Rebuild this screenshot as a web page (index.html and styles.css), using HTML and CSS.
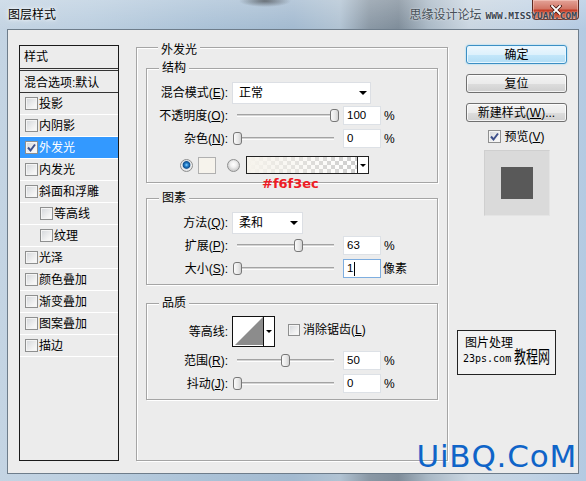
FILE: index.html
```html
<!DOCTYPE html>
<html lang="zh-CN">
<head>
<meta charset="utf-8">
<title>图层样式</title>
<link rel="stylesheet" href="styles.css">
</head>
<body>
<div class="window">
  <div class="titlebar">
    <span class="title">图层样式</span>
    <span class="site"><span class="site-cn">思缘设计论坛</span><span class="site-url">WWW.MISSYUAN.COM</span></span>
    <span class="close"><svg width="12" height="10" viewBox="0 0 12 10"><path d="M2 1L10 9M10 1L2 9" stroke="#43160f" stroke-width="3.4" stroke-linecap="square"/><path d="M2 1L10 9M10 1L2 9" stroke="#fff" stroke-width="1.8" stroke-linecap="square"/></svg></span>
  </div>
  <div class="client">
    <div class="stylelist">
      <div class="sl-head">样式</div>
      <div class="sl-blend">混合选项:默认</div>
      <div class="sl-item"><span class="cb"></span>投影</div>
      <div class="sl-item"><span class="cb"></span>内阴影</div>
      <div class="sl-item selected"><span class="cb"><svg width="11" height="11" viewBox="0 0 11 11"><path d="M2 5.5L4.5 8.5L9 2.5" stroke="#3d4f8a" stroke-width="2" fill="none"/></svg></span>外发光</div>
      <div class="sl-item"><span class="cb"></span>内发光</div>
      <div class="sl-item"><span class="cb"></span>斜面和浮雕</div>
      <div class="sl-item sl-sub"><span class="cb"></span>等高线</div>
      <div class="sl-item sl-sub"><span class="cb"></span>纹理</div>
      <div class="sl-item"><span class="cb"></span>光泽</div>
      <div class="sl-item"><span class="cb"></span>颜色叠加</div>
      <div class="sl-item"><span class="cb"></span>渐变叠加</div>
      <div class="sl-item"><span class="cb"></span>图案叠加</div>
      <div class="sl-item"><span class="cb"></span>描边</div>
    </div>

    <div class="group outer">
      <div class="legend legend-outer">外发光</div>

      <div class="group sub g-struct">
        <div class="legend">结构</div>
        <div class="row r-sel">
          <span class="lab">混合模式(<u>E</u>):</span>
          <div class="select sel-blend"><span>正常</span><span class="tri"></span></div>
        </div>
        <div class="row r-a">
          <span class="lab">不透明度(<u>O</u>):</span>
          <div class="slider"><span class="track"></span><span class="knob" style="left:98px"></span></div>
          <span class="num">100</span><span class="pct">%</span>
        </div>
        <div class="row r-b">
          <span class="lab">杂色(<u>N</u>):</span>
          <div class="slider"><span class="track"></span><span class="knob" style="left:1px"></span></div>
          <span class="num">0</span><span class="pct">%</span>
        </div>
        <div class="row r-color">
          <span class="radio on"></span>
          <span class="swatch"></span>
          <span class="radio"></span>
          <div class="gradbox"><span class="grad-fill"></span><span class="grad-arrow"><span class="tri small"></span></span></div>
        </div>
      </div>

      <div class="group sub g-elem">
        <div class="legend">图素</div>
        <div class="row r-sel">
          <span class="lab">方法(<u>Q</u>):</span>
          <div class="select sel-method"><span>柔和</span><span class="tri"></span></div>
        </div>
        <div class="row r-a">
          <span class="lab">扩展(<u>P</u>):</span>
          <div class="slider"><span class="track"></span><span class="knob" style="left:62px"></span></div>
          <span class="num">63</span><span class="pct">%</span>
        </div>
        <div class="row r-b">
          <span class="lab">大小(<u>S</u>):</span>
          <div class="slider"><span class="track"></span><span class="knob" style="left:1px"></span></div>
          <span class="num focus">1<span class="caret"></span></span><span class="unit">像素</span>
        </div>
      </div>

      <div class="group sub g-qual">
        <div class="legend">品质</div>
        <div class="row r-contour">
          <span class="lab">等高线:</span>
          <div class="contour">
            <svg class="curve" width="30" height="29" viewBox="0 0 30 29"><rect width="30" height="29" fill="#fff"/><polygon points="2,28 30,0 30,28" fill="#8c8c8c"/></svg>
            <span class="contour-arrow"><span class="tri small"></span></span>
          </div>
          <span class="cb aa"></span><span class="aa-text">消除锯齿(<u>L</u>)</span>
        </div>
        <div class="row r-b">
          <span class="lab">范围(<u>R</u>):</span>
          <div class="slider"><span class="track"></span><span class="knob" style="left:49px"></span></div>
          <span class="num">50</span><span class="pct">%</span>
        </div>
        <div class="row r-b">
          <span class="lab">抖动(<u>J</u>):</span>
          <div class="slider"><span class="track"></span><span class="knob" style="left:1px"></span></div>
          <span class="num">0</span><span class="pct">%</span>
        </div>
      </div>
    </div>

    <div class="rcol">
      <div class="btn default">确定</div>
      <div class="btn">复位</div>
      <div class="btn">新建样式(<u>W</u>)...</div>
      <div class="pv"><span class="cb"><svg width="11" height="11" viewBox="0 0 11 11"><path d="M2 5.5L4.5 8.5L9 2.5" stroke="#3d4f8a" stroke-width="2" fill="none"/></svg></span><span>预览(<u>V</u>)</span></div>
      <div class="preview"><div class="preview-inner"></div></div>
      <div class="logo">
        <div class="logo-left"><span class="logo-cn">图片处理</span><span class="logo-url">23ps.com</span></div>
        <span class="logo-big">教程网</span>
      </div>
    </div>
  </div>
  <span class="hex">#f6f3ec</span>
  <span class="uibq">UiBQ.CoM</span>
</div>
</body>
</html>
```

FILE: styles.css
```css
* { box-sizing: border-box; }
html, body { margin: 0; padding: 0; }
body {
  width: 586px;
  height: 481px;
  overflow: hidden;
  font-family: "Liberation Sans", "Noto Sans CJK SC", sans-serif;
  font-size: 12px;
  line-height: 14px;
  color: #000;
  background: #b9cde2;
}
u { text-decoration: underline; text-underline-offset: 1px; }

.window {
  position: relative;
  width: 586px;
  height: 481px;
  display: flex;
  flex-direction: column;
  background:
    radial-gradient(ellipse 26px 6px at 265px 1px, rgba(40,40,40,0.55), rgba(40,40,40,0)),
    linear-gradient(rgba(255,255,255,0.22), rgba(255,255,255,0) 29px),
    linear-gradient(90deg, #c4d4e3 0%, #bccfe0 15%, #abc2d7 35%, #a3bad0 50%, #b1c3d3 58%, #8a98a5 63%, #7f8d9a 68%, #a9b8c5 73%, #cad6e1 80%, #c2d3e4 90%, #b4cae2 100%);
}

.titlebar {
  height: 29px;
  display: flex;
  align-items: center;
  padding-left: 8px;
  flex: none;
}
.title { text-shadow: 0 0 6px #fff, 0 0 3px #fff; }
.site {
  margin-left: auto;
  margin-right: 9px;
  display: flex;
  align-items: center;
  position: relative;
  z-index: 2;
}
.site-cn { color: #474f57; text-shadow: 0 0 2px rgba(255,255,255,0.8); }
.site-url {
  margin-left: 4px;
  font-family: "DejaVu Sans Mono", monospace;
  font-weight: bold;
  font-size: 9.5px;
  color: #3a4550;
  text-shadow: 0 0 2px #fff;
  padding-top: 2px;
}
.close {
  position: absolute;
  top: 0;
  right: 7px;
  width: 47px;
  height: 20px;
  border: 1px solid #5e2a22;
  border-top: none;
  border-radius: 0 0 4px 4px;
  background: linear-gradient(#e3a398 0%, #d27666 45%, #c23a24 55%, #cf5a3e 100%);
  box-shadow: inset 0 0 0 1px rgba(255,220,210,0.45);
  display: flex;
  align-items: center;
  justify-content: center;
}

.client {
  height: 445px;
  margin: 0 7px;
  border: 1px solid #6e7d8b;
  background: #ececec;
  display: flex;
  align-items: flex-start;
  padding-left: 11px;
  flex: none;
}

/* style list */
.stylelist {
  width: 100px;
  height: 416px;
  margin-top: 15px;
  border: 1px solid #1a1a1a;
  flex: none;
}
.sl-head {
  height: 23px;
  padding-left: 4px;
  display: flex;
  align-items: center;
  border-bottom: 1px solid #333;
}
.sl-blend {
  height: 23px;
  margin-top: 1px;
  padding-left: 4px;
  padding-top: 2px;
  display: flex;
  align-items: center;
  border-top: 1px solid #333;
  border-bottom: 1px solid #333;
}
.sl-item {
  height: 22px;
  border-bottom: 1px solid #fff;
  display: flex;
  align-items: center;
  padding-left: 5px;
  gap: 1px;
}
.sl-item.sl-sub { padding-left: 20px; }
.sl-item.selected { background: #3399ff; color: #fff; border-bottom-color: #fff; }

.cb {
  width: 13px;
  height: 13px;
  flex: none;
  border: 1px solid #8e8f8f;
  background: linear-gradient(135deg, #d3d6da 0%, #f3f3f3 70%, #fbfbfb 100%);
  box-shadow: inset 0 0 0 1px #f4f4f4;
  display: flex;
  align-items: center;
  justify-content: center;
}
.cb svg { display: block; }

/* groups */
.group {
  border: 1px solid #a5a5a5;
  box-shadow: inset 1px 1px 0 #fff, 1px 1px 0 #fff;
}
.legend {
  width: max-content;
  margin: -8px 0 0 12px;
  padding: 0 3px;
  background: #ececec;
  line-height: 14px;
}
.legend-outer { margin-top: -5px; }
.outer {
  width: 312px;
  height: 414px;
  margin-top: 17px;
  margin-left: 17px;
  padding: 0 9px 0 9px;
  flex: none;
}
.sub { width: 292px; }
.g-struct { margin-top: 11px; padding-bottom: 8px; }
.g-elem { margin-top: 15px; padding-bottom: 6px; }
.g-qual { margin-top: 18px; padding-bottom: 6px; }

.row { display: flex; align-items: center; }
.r-sel { height: 22px; margin-top: 7px; }
.r-a { height: 19px; margin-top: 2px; }
.r-b { height: 19px; margin-top: 4px; }
.r-color { height: 18px; margin-top: 8px; padding-left: 33px; }
.r-contour { height: 31px; margin-top: 6px; }

.lab {
  width: 81px;
  margin-right: 4px;
  text-align: right;
  white-space: nowrap;
  flex: none;
}

.select {
  height: 22px;
  border: 1px solid #dcdfe4;
  background: #fff;
  display: flex;
  align-items: center;
  justify-content: space-between;
  padding-left: 6px;
  flex: none;
}
.sel-blend { width: 139px; padding-right: 3px; }
.sel-method { width: 71px; padding-right: 4px; }
.tri {
  width: 0;
  height: 0;
  border-left: 4px solid transparent;
  border-right: 4px solid transparent;
  border-top: 4px solid #000;
}
.tri.small {
  border-left-width: 3px;
  border-right-width: 3px;
  border-top-width: 3px;
}

.slider {
  position: relative;
  width: 106px;
  height: 19px;
  display: flex;
  align-items: center;
  padding: 0 4px 0 5px;
  flex: none;
}
.track {
  flex: 1;
  height: 3px;
  border-top: 1px solid #a3a3a3;
  border-bottom: 1px solid #fdfdfd;
  background: #d4d4d4;
}
.knob {
  position: absolute;
  top: 3px;
  width: 9px;
  height: 13px;
  border: 1px solid #777;
  border-radius: 3px;
  background: linear-gradient(90deg, #fafafa 0%, #e8e8e8 60%, #d2d2d2 100%);
}
.num {
  width: 38px;
  height: 19px;
  margin-left: 5px;
  border: 1px solid #dde1e6;
  background: #fff;
  padding-left: 3px;
  font-family: "Liberation Sans", sans-serif;
  font-size: 11.5px;
  line-height: 17px;
  display: flex;
  align-items: center;
  flex: none;
}
.num.focus { border-color: #7eaee0; }
.caret { width: 1px; height: 14px; background: #000; margin-left: 1px; }
.pct { margin-left: 3px; font-size: 12px; }
.unit { margin-left: 2px; }

.radio {
  width: 13px;
  height: 13px;
  border-radius: 50%;
  border: 1px solid #8e8f8f;
  background: radial-gradient(circle at 50% 40%, #ffffff 0, #f0f0f0 3px, #cfcfcf 6px);
  flex: none;
}
.radio.on {
  background: radial-gradient(circle at 50% 45%, #8fd8ff 0, #2a86d2 1.6px, #0f4f8e 3.4px, #cfd7de 4.2px, #f2f2f2 5px, #dadada 6px);
}
.swatch {
  width: 18px;
  height: 17px;
  margin-left: 5px;
  margin-right: 11px;
  background: #f6f3ec;
  border: 1px solid #b0b0b0;
  flex: none;
}
.gradbox {
  width: 123px;
  height: 18px;
  margin-left: 6px;
  border: 1px solid #222;
  display: flex;
  flex: none;
}
.grad-fill {
  flex: 1;
  background:
    linear-gradient(90deg, #f6f3ec 0%, rgba(246,243,236,0.6) 40%, rgba(246,243,236,0) 100%),
    conic-gradient(#cdcdcd 0 25%, #fff 0 50%, #cdcdcd 0 75%, #fff 0) 0 0 / 8px 8px;
}
.grad-arrow {
  width: 11px;
  border-left: 1px solid #222;
  background: #fff;
  display: flex;
  align-items: center;
  justify-content: center;
}

.contour {
  width: 43px;
  height: 31px;
  border: 1px solid #111;
  display: flex;
  flex: none;
  background: #fff;
}
.curve { display: block; }
.contour-arrow {
  width: 11px;
  border-left: 1px solid #111;
  background: #fff;
  display: flex;
  align-items: center;
  justify-content: center;
}
.cb.aa { margin-left: 13px; width: 12px; height: 12px; margin-top: -4px; }
.aa-text { margin-left: 3px; margin-top: -4px; }

/* right column */
.rcol {
  width: 101px;
  margin-left: 18px;
  margin-top: 15px;
  display: flex;
  flex-direction: column;
  align-items: center;
  flex: none;
}
.btn {
  width: 101px;
  height: 19px;
  margin-bottom: 10px;
  border: 1px solid #707070;
  border-radius: 3px;
  background: linear-gradient(#f3f3f3 0%, #ebebeb 50%, #dddddd 51%, #cfcfcf 100%);
  box-shadow: inset 0 0 0 1px rgba(255,255,255,0.75);
  display: flex;
  align-items: center;
  justify-content: center;
}
.btn.default {
  border-color: #3c8fc4;
  background: linear-gradient(#eef7fd 0%, #ddf1fc 50%, #c4e7fa 51%, #b2ddf5 100%);
  box-shadow: inset 0 0 0 1px #e6f6ff, 0 0 2px #7fd0f5;
}
.btn:nth-child(3) { margin-bottom: 0; }
.pv {
  margin-top: 8px;
  height: 13px;
  display: flex;
  align-items: center;
  gap: 3px;
}
.preview {
  width: 66px;
  height: 66px;
  margin-top: 7px;
  background: #dadada;
  border: 1px solid #cfcfcf;
  border-right-color: #e4e4e4;
  border-bottom-color: #e4e4e4;
  display: flex;
  align-items: center;
  justify-content: center;
}
.preview-inner { width: 32px; height: 32px; background: #595959; }
.logo {
  align-self: flex-start;
  width: 99px;
  height: 45px;
  margin-top: 114px;
  margin-left: -9px;
  border: 1px solid #222;
  background: #f2f2f2;
  display: flex;
  padding: 4px 0 0 5px;
}
.logo-left { display: flex; flex-direction: column; }
.logo-cn { font-family: "Noto Sans CJK SC", sans-serif; font-size: 12px; line-height: 14px; padding-left: 2px; }
.logo-url { font-family: "DejaVu Sans Mono", monospace; font-size: 10px; line-height: 14px; margin-top: 3px; }
.logo-big {
  align-self: flex-end;
  margin-bottom: 8px;
  margin-left: 1px;
  font-family: "Noto Sans CJK SC", sans-serif;
  font-size: 12px;
  line-height: 14px;
  transform: scaleY(1.45);
  transform-origin: bottom left;
}

.hex {
  position: absolute;
  left: 262px;
  top: 177px;
  font-family: "DejaVu Sans", sans-serif;
  font-weight: bold;
  font-size: 13px;
  line-height: 13px;
  color: #ee1c25;
}
.uibq {
  position: absolute;
  right: 9px;
  top: 441px;
  font-family: "DejaVu Sans", sans-serif;
  font-size: 31px;
  line-height: 31px;
  letter-spacing: 0.8px;
  color: #0f64c8;
}
```
